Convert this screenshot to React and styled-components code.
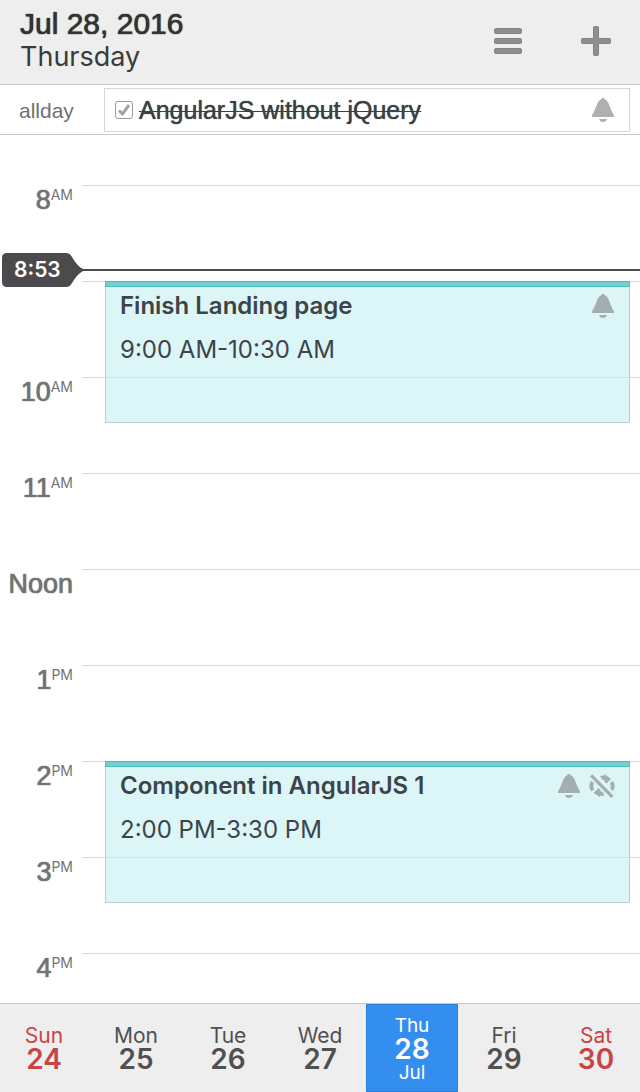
import React from "react";
import styled, { createGlobalStyle } from "styled-components";

const HOUR = 96;
const FIRST_HOUR = 8;
const LEAD = 50;

const offsetOf = (time) => LEAD + (time - FIRST_HOUR) * HOUR;

const GlobalStyle = createGlobalStyle`
  *, *::before, *::after { box-sizing: border-box; }
  body {
    margin: 0;
    background: #fff;
    color: #3c4448;
    font-family: Inter, "Liberation Sans", sans-serif;
  }
  h1, p, ul, ol { margin: 0; padding: 0; list-style: none; }
  button { font: inherit; border: 0; padding: 0; background: none; cursor: pointer; }
`;

const Page = styled.div`
  display: flex;
  flex-direction: column;
  height: 100vh;
  overflow: hidden;
`;

const Header = styled.header`
  display: flex;
  align-items: center;
  justify-content: space-between;
  flex: none;
  padding: 8px 20px 10px;
  background: #eee;
  border-bottom: 1px solid #c8c8c8;
`;

const DateTitle = styled.h1`
  font: 400 30px/32px "Liberation Sans", Arial, sans-serif;
  color: #333;
  text-shadow: 0 0 1px #333, 0 0 1px #333;
`;

const Weekday = styled.p`
  font-size: 27px;
  line-height: 34px;
  color: #3a3a3a;
`;

const Actions = styled.div`
  display: flex;
  gap: 40px;
`;

const IconButton = styled.button`
  display: grid;
  place-items: center;
  width: 48px;
  height: 48px;
  color: #8f8f8f;
`;

const AllDay = styled.section`
  display: flex;
  align-items: center;
  flex: none;
  padding: 3px 10px 2px 0;
  border-bottom: 1px solid #c8c8c8;
`;

const AllDayLabel = styled.span`
  width: 104px;
  padding: 2px 0 0 19px;
  font: 400 21px/24px "Liberation Sans", Arial, sans-serif;
  color: #707070;
`;

const Task = styled.div`
  display: flex;
  align-items: center;
  justify-content: space-between;
  flex: 1;
  height: 44px;
  padding: 0 14px 0 10px;
  border: 1px solid #d6d6d6;
`;

const TaskLabel = styled.label`
  display: flex;
  align-items: center;
  gap: 6px;
  font: 400 25px/28px "Liberation Sans", Arial, sans-serif;
  color: #3c4043;
  text-shadow: 0 0 1px #3c4043;
`;

const TaskName = styled.s`
  text-decoration-thickness: 1px;
`;

const CheckWrap = styled.span`
  position: relative;
  display: flex;
  svg { position: absolute; left: 0; top: 0; pointer-events: none; }
`;

const Check = styled.input`
  appearance: none;
  width: 18px;
  height: 18px;
  margin: 0;
  border: 1px solid #999;
  border-radius: 3px;
  background: #fff;
  & + svg { visibility: hidden; }
  &:checked + svg { visibility: visible; }
`;

const Timeline = styled.main`
  position: relative;
  flex: 1;
  min-height: 0;
  overflow: hidden auto;
  scrollbar-width: none;
`;

const Hours = styled.ol`
  && { padding-top: ${LEAD}px; }
`;

const HourRow = styled.li`
  display: flex;
  height: ${HOUR}px;
  &::after {
    content: "";
    flex: 1;
    border-top: 1px solid #d9d9d9;
  }
`;

const HourLabel = styled.span`
  display: flex;
  justify-content: flex-end;
  align-items: flex-start;
  width: 82px;
  padding-right: 9px;
  color: #737373;
`;

const HourNumber = styled.span`
  font: 400 27px/30px "Liberation Sans", Arial, sans-serif;
  text-shadow: 0 0 1px #737373, 0 0 1px #737373;
`;

const Meridiem = styled.span`
  font-size: 14px;
  line-height: 20px;
`;

const EventCard = styled.article`
  position: absolute;
  left: 105px;
  right: 10px;
  padding: 10px 14px;
  background: rgba(197, 238, 242, 0.6);
  border: 1px solid #b5cdd3;
  border-top: 0;
  &::before {
    content: "";
    position: absolute;
    inset: 0 -1px auto;
    height: 6px;
    background: #72cfd2;
    border: 1px solid #54b8bd;
  }
`;

const EventHead = styled.div`
  display: flex;
  align-items: center;
  justify-content: space-between;
  line-height: 30px;
`;

const EventTitle = styled.strong`
  font-size: 24px;
  font-weight: 600;
`;

const EventTime = styled.p`
  margin-top: 14px;
  font-size: 24px;
  line-height: 30px;
`;

const EventIcons = styled.span`
  display: flex;
  align-items: center;
  gap: 8px;
  color: #a3aeb0;
`;

const NowLine = styled.div`
  position: absolute;
  left: 2px;
  right: 0;
  display: flex;
  align-items: center;
  height: 34px;
  &::after {
    content: "";
    flex: 1;
    height: 2px;
    background: #4c4a4c;
  }
`;

const NowTag = styled.time`
  position: relative;
  isolation: isolate;
  width: 81px;
  padding-left: 12px;
  font-size: 21px;
  font-weight: 600;
  line-height: 34px;
  color: #fff;
  svg { position: absolute; left: 0; top: 0; z-index: -1; }
`;

const Week = styled.nav`
  display: grid;
  grid-template-columns: repeat(7, 1fr);
  flex: none;
  height: 89px;
  margin: 0 -2px;
  background: #eee;
  border-top: 1px solid #c8c8c8;
`;

const Day = styled.button`
  display: flex;
  flex-direction: column;
  align-items: center;
  justify-content: center;
  && { padding: ${(p) => (p.$selected ? "2px 0 0" : "0 0 2px")}; }
  color: ${(p) => (p.$selected ? "#fff" : p.$weekend ? "#c94545" : "#505050")};
  ${(p) => p.$selected && "background: #338eef; box-shadow: inset 0 0 0 1px #2c7fd9;"}
`;

const DayName = styled.span`
  font-size: ${(p) => (p.$selected ? 19 : 21)}px;
  line-height: 23px;
`;

const DayNumber = styled.span`
  font-size: 28px;
  font-weight: 600;
  line-height: 24px;
`;

const Bell = ({ color = "currentColor" }) => (
  <svg width="24" height="26" viewBox="0 0 24 26" fill={color} aria-hidden="true">
    <path d="M12 1c1.100 0 1.700.6 2.100 1.600 1.700.9 2.800 2.400 3.700 4.400 1.600 3.800 3 8 5.200 11.300V20H1v-1.700C3.200 15 4.600 10.800 6.200 7c.9-2 2-3.500 3.700-4.400C10.300 1.600 10.900 1 12 1z" />
    <path d="M8 22h8c-.5 1.800-2 3-4 3s-3.500-1.200-4-3z" />
  </svg>
);

const NoRepeat = () => (
  <svg width="26" height="26" viewBox="0 0 26 26" fill="currentColor" aria-hidden="true">
    <path d="M11 3.200c1.500-.6 3-.7 4.500-.5V1L22 6l-4.500 4.500-2-1.700V7c-.6-.1-1.200-.1-1.800 0z" />
    <path d="M15.500 22.300c-1.500.6-3 .7-4.500.5V24L4.500 20 9.500 15l2 1.700V18.500c.6.1 1.200.1 1.800 0z" />
    <path d="M2 8l3 2c-.9 2-.9 4 .1 6L2.800 18.500C-.2 15.300-.3 11.500 2 8z" />
    <path d="M24 8l-3 2c.8 1.800.9 3.600.3 5.500l2.500 2.500c2.400-3 2.500-6.800.2-10z" />
    <path d="M3.200 1.300l21.300 21.500-2.300 2.300L1 3.600z" />
  </svg>
);

const hours = [
  ["8", "AM"], [], ["10", "AM"], ["11", "AM"], ["Noon"],
  ["1", "PM"], ["2", "PM"], ["3", "PM"], ["4", "PM"],
];

const events = [
  { title: "Finish Landing page", time: "9:00 AM-10:30 AM", start: 9, end: 10.5 },
  { title: "Component in AngularJS 1", time: "2:00 PM-3:30 PM", start: 14, end: 15.5, single: true },
];

const days = [
  ["Sun", 24], ["Mon", 25], ["Tue", 26], ["Wed", 27], ["Thu", 28], ["Fri", 29], ["Sat", 30],
];

export default function App() {
  return (
    <Page>
      <GlobalStyle />
      <Header>
        <div>
          <DateTitle>Jul 28, 2016</DateTitle>
          <Weekday>Thursday</Weekday>
        </div>
        <Actions>
          <IconButton type="button" aria-label="Menu">
            <svg width="28" height="26" viewBox="0 0 28 26" fill="#8f8f8f" stroke="#828282">
              {[0.5, 10.5, 20.5].map((y) => (
                <rect key={y} x=".5" y={y} width="27" height="5" rx="1.500" />
              ))}
            </svg>
          </IconButton>
          <IconButton type="button" aria-label="Add event">
            <svg width="30" height="30" viewBox="0 0 30 30" fill="#8f8f8f" stroke="#828282">
              <path d="M13.500.5h3q1 0 1 1v11h11q1 0 1 1v3q0 1-1 1h-11v11q0 1-1 1h-3q-1 0-1-1v-11h-11q-1 0-1-1v-3q0-1 1-1h11v-11q0-1 1-1z" />
            </svg>
          </IconButton>
        </Actions>
      </Header>

      <AllDay>
        <AllDayLabel>allday</AllDayLabel>
        <Task>
          <TaskLabel>
            <CheckWrap>
              <Check type="checkbox" defaultChecked />
              <svg width="18" height="18" viewBox="0 0 18 18" fill="none" stroke="#a3a3a3" strokeWidth="3">
                <path d="M4 9.500l3.500 3.500L14 4" />
              </svg>
            </CheckWrap>
            <TaskName>AngularJS without jQuery</TaskName>
          </TaskLabel>
          <Bell color="#b0b0b0" />
        </Task>
      </AllDay>

      <Timeline>
        <Hours>
          {hours.map(([label, half], i) => (
            <HourRow key={i}>
              <HourLabel>
                <HourNumber>{label}</HourNumber>
                {half && <Meridiem>{half}</Meridiem>}
              </HourLabel>
            </HourRow>
          ))}
        </Hours>
        {events.map((e) => (
          <EventCard
            key={e.title}
            style={{ top: offsetOf(e.start), height: (e.end - e.start) * HOUR - 2 }}
          >
            <EventHead>
              <EventTitle>{e.title}</EventTitle>
              <EventIcons>
                <Bell />
                {e.single && <NoRepeat />}
              </EventIcons>
            </EventHead>
            <EventTime>{e.time}</EventTime>
          </EventCard>
        ))}
        <NowLine style={{ top: Math.round(offsetOf(8 + 53 / 60)) - 17 }}>
          <NowTag>
            8:53
            <svg width="81" height="34" viewBox="0 0 81 34" fill="#4c4a4c" aria-hidden="true">
              <path d="M5 0h59c3 0 4.500 1.500 6 4 3.500 6 7 10 11 12v2c-4 2-7.500 6-11 12-1.500 2.500-3 4-6 4H5q-5 0-5-5V5q0-5 5-5z" />
            </svg>
          </NowTag>
        </NowLine>
      </Timeline>

      <Week aria-label="Week">
        {days.map(([name, number]) => {
          const selected = number === 28;
          return (
            <Day
              key={number}
              type="button"
              $selected={selected}
              $weekend={name === "Sun" || name === "Sat"}
              aria-current={selected ? "date" : undefined}
            >
              <DayName $selected={selected}>{name}</DayName>
              <DayNumber>{number}</DayNumber>
              {selected && <DayName $selected>Jul</DayName>}
            </Day>
          );
        })}
      </Week>
    </Page>
  );
}
